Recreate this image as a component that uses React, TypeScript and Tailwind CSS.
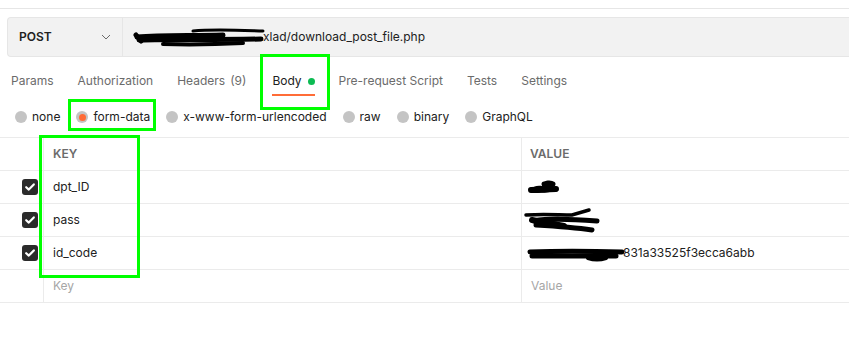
import React from "react";

const Radio = ({ on }: { on?: boolean }) => (
  <span className="relative flex h-[12px] w-[12px] items-center justify-center rounded-full bg-[#c4c4c4]">
    {on && <span className="h-[7px] w-[7px] rounded-full bg-[#ff6c37]" />}
  </span>
);

const Check = () => (
  <span className="flex h-[16px] w-[16px] items-center justify-center rounded-[3px] bg-[#2b2b2b]">
    <svg width="12" height="12" viewBox="0 0 12 12">
      <path d="M2.2 6.2 L4.8 8.6 L9.8 3.4" fill="none" stroke="#fff" strokeWidth="2.2" strokeLinecap="round" strokeLinejoin="round" />
    </svg>
  </span>
);

const rows = [
  { k: "dpt_ID", v: "s1" },
  { k: "pass", v: "s2" },
  { k: "id_code", v: "s3" },
];

function ValueCell({ v }: { v: string }) {
  if (v === "s1")
    return (
      <svg width="34" height="18" viewBox="0 0 34 18" className="ml-[2px]">
        <path d="M2 12 C5 8 10 7 14 8 L16 4 C19 2 25 2 26 5 L25 8 C27 9 29 10 29 12 C22 15 12 15 3 15 Z" fill="#000" />
        <path d="M3 12 L28 11" stroke="#000" strokeWidth="6" strokeLinecap="round" />
        <path d="M16 6 L25 6" stroke="#000" strokeWidth="5" strokeLinecap="round" />
      </svg>
    );
  if (v === "s2")
    return (
      <svg width="80" height="30" viewBox="0 0 80 30" className="-ml-[2px] mt-[2px]">
        <path d="M2 9 C20 8 35 9 48 9 L65 4" stroke="#000" strokeWidth="3.5" strokeLinecap="round" fill="none" />
        <path d="M10 15 C25 12 45 13 73 15" stroke="#000" strokeWidth="5" strokeLinecap="round" fill="none" />
        <path d="M12 19 C30 20 48 21 68 24" stroke="#000" strokeWidth="5" strokeLinecap="round" fill="none" />
        <path d="M8 14 L40 20" stroke="#000" strokeWidth="6" strokeLinecap="round" fill="none" />
      </svg>
    );
  return (
    <div className="flex items-center">
      <svg width="99" height="18" viewBox="0 0 99 18" className="-mr-[2px]">
        <path d="M4 8 C30 7 60 7 96 8" stroke="#000" strokeWidth="5" strokeLinecap="round" fill="none" />
        <path d="M6 12 C30 12 55 12 90 12" stroke="#000" strokeWidth="5" strokeLinecap="round" fill="none" />
        <path d="M62 14 C68 16 74 16 80 14" stroke="#000" strokeWidth="4" strokeLinecap="round" fill="none" />
      </svg>
      <span>831a33525f3ecca6abb</span>
    </div>
  );
}

export default function App() {
  const tabs = ["Params", "Authorization", "Headers (9)", "Body", "Pre-request Script", "Tests", "Settings"];
  const radios = ["none", "form-data", "x-www-form-urlencoded", "raw", "binary", "GraphQL"];
  return (
    <div className="relative h-[355px] w-[849px] overflow-hidden bg-white font-['Inter',sans-serif] text-[#212121]">
      <div className="h-[9px] border-b border-[#e6e6e6]" />
      <div className="pl-[7px] pt-[8px]">
        <div className="flex h-[40px] items-stretch rounded-l-[4px] border-y border-l border-[#e6e6e6] bg-[#f2f2f2]">
          <div className="flex w-[115px] items-center justify-between border-r border-[#e6e6e6] pl-[11px] pr-[11px]">
            <span className="text-[12px] font-semibold">POST</span>
            <svg width="10" height="6" viewBox="0 0 10 6">
              <path d="M1 1 L5 5 L9 1" fill="none" stroke="#6b6b6b" strokeWidth="1" />
            </svg>
          </div>
          <div className="flex items-center pl-[10px] text-[12px]">
            <svg width="132" height="24" viewBox="0 0 132 24" className="-mr-[2px]">
              <path d="M4 12 C30 10 60 11 90 10" stroke="#000" strokeWidth="5" strokeLinecap="round" fill="none" />
              <path d="M6 15 C40 14 80 15 128 14" stroke="#000" strokeWidth="5" strokeLinecap="round" fill="none" />
              <path d="M60 6 C80 4 100 5 130 6" stroke="#000" strokeWidth="3" strokeLinecap="round" fill="none" />
              <path d="M30 19 C60 20 90 19 110 18" stroke="#000" strokeWidth="4" strokeLinecap="round" fill="none" />
              <path d="M3 10 L8 16" stroke="#000" strokeWidth="5" strokeLinecap="round" />
            </svg>
            <span>xlad/download_post_file.php</span>
          </div>
        </div>
      </div>

      <div className="flex gap-[24px] pl-[11px] pt-[16px] text-[12px] text-[#6b6b6b]">
        {tabs.map((t) => (
          <div key={t} className={`flex shrink-0 flex-col ${t === "Headers (9)" ? "pr-[2px]" : ""}`}>
            <div className={`flex h-[16px] items-center leading-[16px] ${t === "Body" ? "text-[#212121]" : ""}`}>
              {t === "Headers (9)" ? (
                <>
                  Headers<span className="ml-[5px]">(9)</span>
                </>
              ) : (
                t
              )}
              {t === "Body" && <span className="ml-[6px] h-[7px] w-[7px] shrink-0 rounded-full bg-[#0cbb52]" />}
            </div>
            <div className={`mt-[5px] h-[2px] ${t === "Body" ? "bg-[#ff6c37]" : ""}`} />
          </div>
        ))}
      </div>

      <div className="mt-[13px] flex h-[16px] items-center gap-[16px] pl-[15px] text-[12px] text-[#212121]">
        {radios.map((r) => (
          <div key={r} className="flex items-center gap-[5px]">
            <Radio on={r === "form-data"} />
            <span>{r}</span>
          </div>
        ))}
      </div>

      <div className="mt-[12px] border-t border-[#ebebeb] text-[12px]">
        <div className="flex h-[33px] border-b border-[#ebebeb] font-semibold text-[#6b6b6b]">
          <div className="w-[43px]" />
          <div className="flex w-[478px] items-center border-l border-[#ebebeb] pl-[9px]">KEY</div>
          <div className="flex flex-1 items-center border-l border-[#ebebeb] pl-[8px]">VALUE</div>
        </div>
        {rows.map((r) => (
          <div key={r.k} className="flex h-[33px] border-b border-[#ebebeb]">
            <div className="flex w-[43px] items-center justify-end pr-[5px]">
              <Check />
            </div>
            <div className="flex w-[478px] items-center border-l border-[#ebebeb] pl-[9px]">{r.k}</div>
            <div className="flex flex-1 items-center border-l border-[#ebebeb] pl-[4px]">
              <ValueCell v={r.v} />
            </div>
          </div>
        ))}
        <div className="flex h-[33px] border-b border-[#ebebeb] text-[#a6a6a6]">
          <div className="w-[43px]" />
          <div className="flex w-[478px] items-center border-l border-[#ebebeb] pl-[9px]">Key</div>
          <div className="flex flex-1 items-center border-l border-[#ebebeb] pl-[9px]">Value</div>
        </div>
      </div>

      <div className="absolute left-[260px] top-[54px] h-[56px] w-[70px] border-[3px] border-[#00ff00]" />
      <div className="absolute left-[68px] top-[99px] h-[32px] w-[88px] border-[3px] border-[#00ff00]" />
      <div className="absolute left-[39px] top-[135px] h-[143px] w-[101px] border-[3px] border-[#00ff00]" />
    </div>
  );
}
